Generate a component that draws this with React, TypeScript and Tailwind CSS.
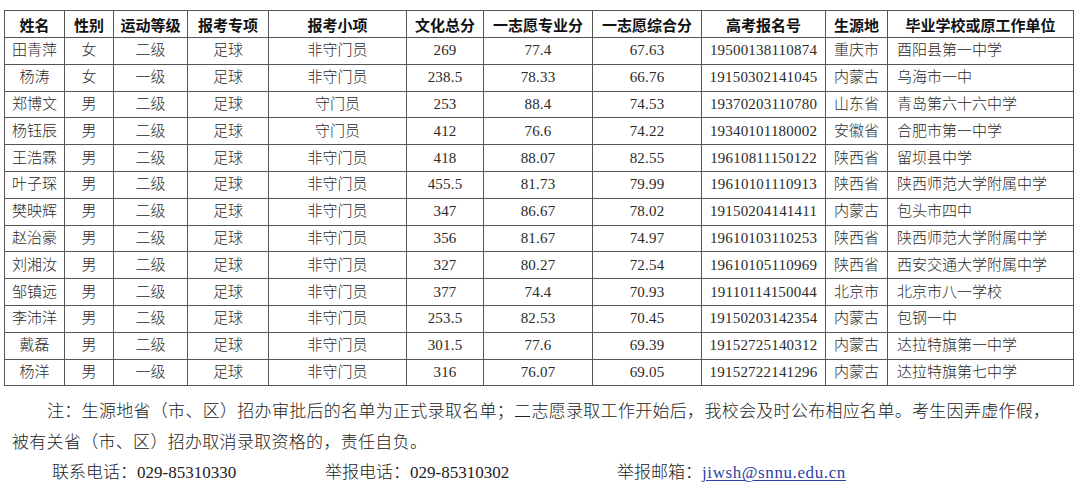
const cols = [60, 49, 74, 81, 138, 77, 109, 109, 124, 62, 186];

const headers = [
  "姓名", "性别", "运动等级", "报考专项", "报考小项", "文化总分",
  "一志愿专业分", "一志愿综合分", "高考报名号", "生源地", "毕业学校或原工作单位",
];

const rows: string[][] = [
  ["田青萍", "女", "二级", "足球", "非守门员", "269", "77.4", "67.63", "19500138110874", "重庆市", "酉阳县第一中学"],
  ["杨涛", "女", "一级", "足球", "非守门员", "238.5", "78.33", "66.76", "19150302141045", "内蒙古", "乌海市一中"],
  ["郑博文", "男", "二级", "足球", "守门员", "253", "88.4", "74.53", "19370203110780", "山东省", "青岛第六十六中学"],
  ["杨钰辰", "男", "二级", "足球", "守门员", "412", "76.6", "74.22", "19340101180002", "安徽省", "合肥市第一中学"],
  ["王浩霖", "男", "二级", "足球", "非守门员", "418", "88.07", "82.55", "19610811150122", "陕西省", "留坝县中学"],
  ["叶子琛", "男", "二级", "足球", "非守门员", "455.5", "81.73", "79.99", "19610101110913", "陕西省", "陕西师范大学附属中学"],
  ["樊映辉", "男", "二级", "足球", "非守门员", "347", "86.67", "78.02", "19150204141411", "内蒙古", "包头市四中"],
  ["赵治豪", "男", "二级", "足球", "非守门员", "356", "81.67", "74.97", "19610103110253", "陕西省", "陕西师范大学附属中学"],
  ["刘湘汝", "男", "二级", "足球", "非守门员", "327", "80.27", "72.54", "19610105110969", "陕西省", "西安交通大学附属中学"],
  ["邹镇远", "男", "二级", "足球", "非守门员", "377", "74.4", "70.93", "19110114150044", "北京市", "北京市八一学校"],
  ["李沛洋", "男", "二级", "足球", "非守门员", "253.5", "82.53", "70.45", "19150203142354", "内蒙古", "包钢一中"],
  ["戴磊", "男", "二级", "足球", "非守门员", "301.5", "77.6", "69.39", "19152725140312", "内蒙古", "达拉特旗第一中学"],
  ["杨洋", "男", "一级", "足球", "非守门员", "316", "76.07", "69.05", "19152722141296", "内蒙古", "达拉特旗第七中学"],
];

export default function App() {
  return (
    <div className="w-[1080px] h-[491px] bg-white overflow-hidden font-['Liberation_Serif','Noto_Sans_CJK_SC',serif] text-[#2a2a2a]">
      <div className="pt-[10px] pl-[4px]">
        <table className="table-fixed border-collapse border border-[#555] w-[1069px]">
          <colgroup>
            {cols.map((w, i) => (
              <col key={i} style={{ width: w }} />
            ))}
          </colgroup>
          <thead>
            <tr className="h-[27px]">
              {headers.map((h) => (
                <th
                  key={h}
                  className="border border-[#555] p-0 text-center text-[15px] font-bold text-[#111] font-['Noto_Sans_CJK_SC',sans-serif] leading-none"
                >
                  {h}
                </th>
              ))}
            </tr>
          </thead>
          <tbody>
            {rows.map((r) => (
              <tr key={r[8]} className="h-[26.8px]">
                {r.map((c, i) => (
                  <td
                    key={i}
                    className={`border border-[#555] p-0 leading-none whitespace-nowrap ${
                      i === 10 ? "text-left pl-[9px]" : "text-center"
                    } ${/^[0-9.]+$/.test(c) ? "text-[15px] tracking-[0.2px]" : "text-[15px] font-light"}`}
                  >
                    {c}
                  </td>
                ))}
              </tr>
            ))}
          </tbody>
        </table>
      </div>

      {/* notes */}
      <div className="mt-[11px] text-[17px] leading-[30.5px] text-[#222] font-light">
        <p className="pl-[47px] whitespace-nowrap tracking-[0.3px]">
          注：生源地省（市、区）招办审批后的名单为正式录取名单；二志愿录取工作开始后，我校会及时公布相应名单。考生因弄虚作假，
        </p>
        <p className="pl-[12px] whitespace-nowrap tracking-[0.3px]">被有关省（市、区）招办取消录取资格的，责任自负。</p>
        <div className="flex pl-[52px] whitespace-nowrap">
          <span className="w-[273px]">联系电话：029-85310330</span>
          <span className="w-[292px]">举报电话：029-85310302</span>
          <span>
            举报邮箱：
            <span className="text-[#2b3fa8] underline underline-offset-2 tracking-[0.6px]">jiwsh@snnu.edu.cn</span>
          </span>
        </div>
      </div>
    </div>
  );
}
